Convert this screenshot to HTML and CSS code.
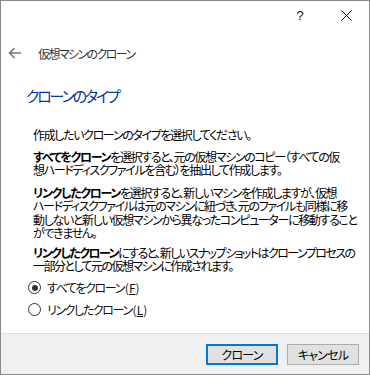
FILE: index.html
```html
<!DOCTYPE html>
<html lang="ja">
<head>
<meta charset="utf-8">
<title>仮想マシンのクローン</title>
<link rel="stylesheet" href="styles.css">
</head>
<body>
<div class="window">
  <div class="titlebar">
    <span class="cap-btn help">?</span>
    <span class="cap-btn close">
      <svg width="11" height="11" viewBox="0 0 11 11"><path d="M0.5 0.5 L10.5 10.5 M10.5 0.5 L0.5 10.5" stroke="#111" stroke-width="1" fill="none"/></svg>
    </span>
  </div>
  <div class="nav">
    <svg class="back" width="14" height="12" viewBox="0 0 14 12"><path d="M13 6 H1.5 M6.5 1 L1.5 6 L6.5 11" stroke="#777" stroke-width="1.6" fill="none"/></svg>
    <span class="nav-title">仮想マシンのクローン</span>
  </div>
  <div class="content">
    <h1 class="heading">クローンのタイプ</h1>
    <p class="para p1">作成したいクローンのタイプを選択してください。</p>
    <p class="para p2"><b>すべてをクローン</b>を選択すると、元の仮想マシンのコピー（すべての仮<br>想ハードディスクファイルを含む）を抽出して作成します。</p>
    <p class="para p3"><b>リンクしたクローン</b>を選択すると、新しいマシンを作成しますが、仮想<br>ハードディスクファイルは元のマシンに紐づき、元のファイルも同様に移<br>動しないと新しい仮想マシンから異なったコンピューターに移動すること<br>ができません。</p>
    <p class="para p4 tight"><b>リンクしたクローン</b>にすると、新しいスナップショットはクローンプロセスの<br>一部分として元の仮想マシンに作成されます。</p>
    <div class="options">
      <label class="radio"><span class="circle checked"></span><span class="label-text">すべてをクローン<span class="key">(<u>F</u>)</span></span></label>
      <label class="radio"><span class="circle"></span><span class="label-text">リンクしたクローン<span class="key">(<u>L</u>)</span></span></label>
    </div>
  </div>
  <div class="footer">
    <button class="btn default">クローン</button>
    <button class="btn">キャンセル</button>
  </div>
</div>
</body>
</html>
```
FILE: styles.css
```css
html, body {
  margin: 0;
  padding: 0;
  background: #ffffff;
}
body {
  font-family: "Noto Sans CJK JP", "Noto Sans", sans-serif;
  font-feature-settings: "palt";
  color: #000;
}
.window {
  width: 370px;
  height: 375px;
  box-sizing: border-box;
  border: 1px solid #8a8a8a;
  display: flex;
  flex-direction: column;
  background: #fff;
  overflow: hidden;
}
.titlebar {
  height: 29px;
  display: flex;
  justify-content: flex-end;
}
.cap-btn {
  width: 46px;
  height: 29px;
  display: flex;
  align-items: center;
  justify-content: center;
}
.help {
  font-family: "Liberation Sans", sans-serif;
  font-size: 13px;
  color: #111;
}
.nav {
  height: 46px;
  display: flex;
  align-items: center;
  padding-left: 7px;
}
.back {
  display: block;
}
.nav-title {
  margin-left: 16px;
  font-size: 12px;
  letter-spacing: -1.6px;
  color: #333;
}
.content {
  flex: 1;
  padding-left: 32px;
}
.heading {
  margin: 0 0 0 -7px;
  font-size: 15px;
  font-weight: normal;
  letter-spacing: -2.2px;
  color: #0033a0;
  line-height: 20px;
  height: 20px;
  padding-top: 10px;
}
.para {
  margin: 0;
  font-size: 12px;
  line-height: 13.5px;
  white-space: nowrap;
  letter-spacing: -1.35px;
}
.para.tight {
  letter-spacing: -1.55px;
}
.para b {
  font-weight: bold;
}
.p1 { margin-top: 22px; }
.p2 { margin-top: 8px; }
.p3 { margin-top: 9px; }
.p4 { margin-top: 6px; }
.options {
  margin-top: 8px;
  display: flex;
  flex-direction: column;
  gap: 8px;
}
.radio {
  display: flex;
  align-items: center;
  gap: 6px;
  font-size: 12px;
  line-height: 14px;
  margin-left: -5px;
  color: #111;
}
.label-text {
  letter-spacing: -1.4px;
}
.key {
  letter-spacing: 0;
  margin-left: 1px;
}
.circle {
  width: 11px;
  height: 11px;
  border: 1px solid #333;
  border-radius: 50%;
  display: flex;
  align-items: center;
  justify-content: center;
  background: #fff;
}
.circle.checked::after {
  content: "";
  width: 6px;
  height: 6px;
  border-radius: 50%;
  background: #333;
}
.footer {
  height: 41px;
  border-top: 1px solid #dfdfdf;
  background: #f0f0f0;
  display: flex;
  justify-content: flex-end;
  align-items: flex-start;
  padding: 10px 10px 0 0;
  box-sizing: border-box;
  gap: 9px;
}
.btn {
  width: 72px;
  height: 21px;
  box-sizing: border-box;
  border: 1px solid #adadad;
  background: #e1e1e1;
  font-family: "Noto Sans CJK JP", sans-serif;
  font-feature-settings: "palt";
  font-size: 12px;
  letter-spacing: -0.8px;
  line-height: 17px;
  padding: 0;
  color: #000;
}
.btn.default {
  border: 2px solid #0078d7;
}
```
